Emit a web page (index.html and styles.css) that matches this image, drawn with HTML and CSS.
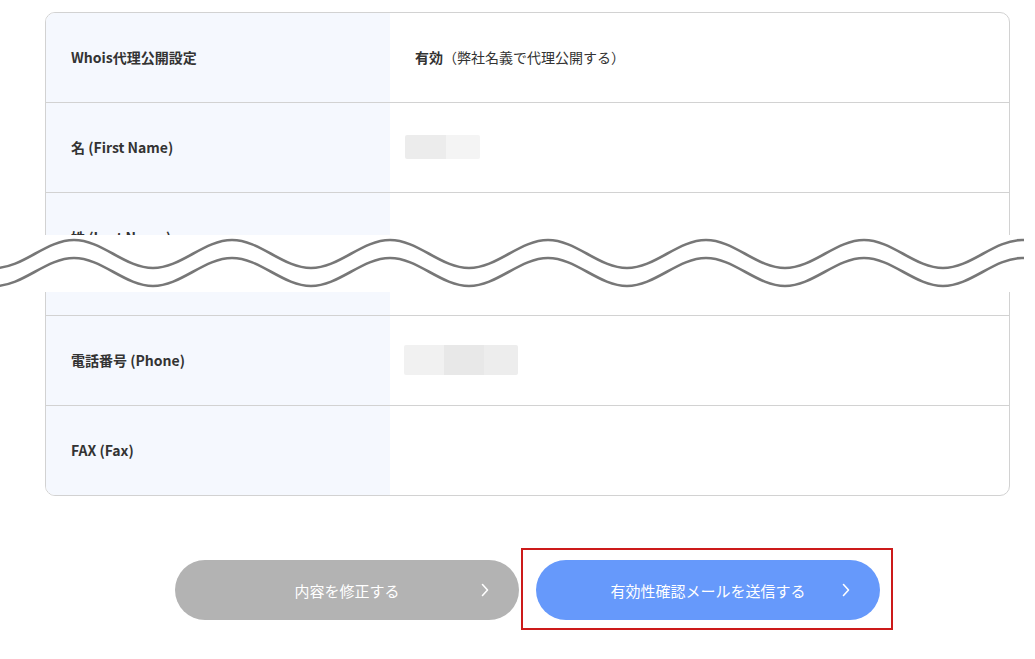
FILE: index.html
```html
<!DOCTYPE html>
<html lang="ja">
<head>
<meta charset="utf-8">
<title>Whois 確認</title>
<link rel="stylesheet" href="styles.css">
</head>
<body>

<div class="page">

	<div class="card">
		<div class="row">
			<div class="label">Whois代理公開設定</div>
			<div class="value"><b>有効</b>（弊社名義で代理公開する）</div>
		</div>
		<div class="row">
			<div class="label">名 (First Name)</div>
			<div class="value">
				<span class="blur">
					<span class="px px1"></span><span class="px px2"></span>
				</span>
			</div>
		</div>
		<div class="row">
			<div class="label">姓 (Last Name)</div>
			<div class="value"></div>
		</div>
		<div class="row short">
			<div class="label"></div>
			<div class="value"></div>
		</div>
		<div class="row">
			<div class="label">電話番号 (Phone)</div>
			<div class="value">
				<span class="blur tall">
					<span class="px px3"></span><span class="px px4"></span><span class="px px5"></span>
				</span>
			</div>
		</div>
		<div class="row">
			<div class="label">FAX (Fax)</div>
			<div class="value"></div>
		</div>
	</div>

	<div class="buttons">
		<a class="btn btn-gray" href="#">内容を修正する<svg class="chev" width="8" height="14" viewBox="0 0 8 14"><polyline points="1.5,1.5 6.5,7 1.5,12.5" /></svg></a>
		<div class="marked">
			<a class="btn btn-blue" href="#">有効性確認メールを送信する<svg class="chev" width="8" height="14" viewBox="0 0 8 14"><polyline points="1.5,1.5 6.5,7 1.5,12.5" /></svg></a>
		</div>
	</div>

	<!-- page break marker drawn over the omitted rows -->
	<div class="cut">
		<svg width="1024" height="57" viewBox="0 0 1024 57">
			<path d="M-84 5 C-56 5 -33 33 -5 33 S46 5 74 5 S125 33 153 33 S204 5 232 5 S283 33 311 33 S362 5 390 5 S441 33 469 33 S520 5 548 5 S599 33 627 33 S678 5 706 5 S757 33 785 33 S836 5 864 5 S915 33 943 33 S994 5 1022 5 S1073 33 1101 33" />
			<path d="M-84 23 C-56 23 -33 51 -5 51 S46 23 74 23 S125 51 153 51 S204 23 232 23 S283 51 311 51 S362 23 390 23 S441 51 469 51 S520 23 548 23 S599 51 627 51 S678 23 706 23 S757 51 785 51 S836 23 864 23 S915 51 943 51 S994 23 1022 23 S1073 51 1101 51" />
		</svg>
	</div>

</div>

</body>
</html>
```

FILE: styles.css
```css
* {
	box-sizing: border-box;
}
body {
	margin: 0;
	background-color: #ffffff;
	font-family: "Noto Sans CJK JP", "Noto Sans", sans-serif;
	color: #333333;
}
.page {
	position: relative;
	padding: 12px 25px 30px 45px;
}
.card {
	width: 965px;
	border: 1px solid #d2d2d2;
	border-radius: 10px;
	overflow: hidden;
}
.row {
	display: grid;
	grid-template-columns: 344px 1fr;
	height: 90px;
	border-top: 1px solid #d2d2d2;
}
.row:first-child {
	border-top: none;
	height: 89px;
}
.row.short {
	height: 33px;
}
.label {
	display: flex;
	align-items: center;
	padding: 0 0 2px 25px;
	background-color: #f5f8fe;
	font-size: 14px;
	font-weight: bold;
}
.value {
	display: flex;
	align-items: center;
	padding: 0 0 2px 25px;
	font-size: 14px;
}
.value b {
	font-weight: bold;
}
.blur {
	display: flex;
	height: 24px;
	margin-left: -10px;
	border-radius: 2px;
	overflow: hidden;
	filter: blur(0.6px);
}
.blur.tall {
	height: 30px;
	margin-left: -11px;
}
.px {
	display: block;
	height: 100%;
}
.px1 {
	width: 41px;
	background-color: #ececec;
}
.px2 {
	width: 34px;
	background-color: #f4f4f4;
}
.px3 {
	width: 40px;
	background-color: #f1f1f1;
}
.px4 {
	width: 40px;
	background-color: #e8e8e8;
}
.px5 {
	width: 34px;
	background-color: #ededed;
}
.buttons {
	display: flex;
	justify-content: center;
	gap: 17px;
	width: 965px;
	margin-top: 64px;
}
.btn {
	position: relative;
	display: flex;
	align-items: center;
	justify-content: center;
	width: 344px;
	height: 60px;
	border-radius: 30px;
	color: #ffffff;
	font-size: 15px;
	text-decoration: none;
}
.btn-gray {
	background-color: #b3b3b3;
}
.btn-blue {
	background-color: #6699fb;
}
.chev {
	position: absolute;
	right: 30px;
	top: 23px;
}
.chev polyline {
	fill: none;
	stroke: #ffffff;
	stroke-width: 1.6;
	stroke-linecap: round;
	stroke-linejoin: round;
}
.marked {
	position: relative;
}
.marked::after {
	content: "";
	position: absolute;
	left: -15px;
	top: -12px;
	right: -13px;
	bottom: -10px;
	border: 2px solid #cc1a1a;
}
.cut {
	position: absolute;
	left: 0;
	top: 235px;
	width: 1024px;
	height: 57px;
	background-color: #ffffff;
}
.cut svg {
	display: block;
}
.cut path {
	fill: none;
	stroke: #777777;
	stroke-width: 2.6;
}
```
